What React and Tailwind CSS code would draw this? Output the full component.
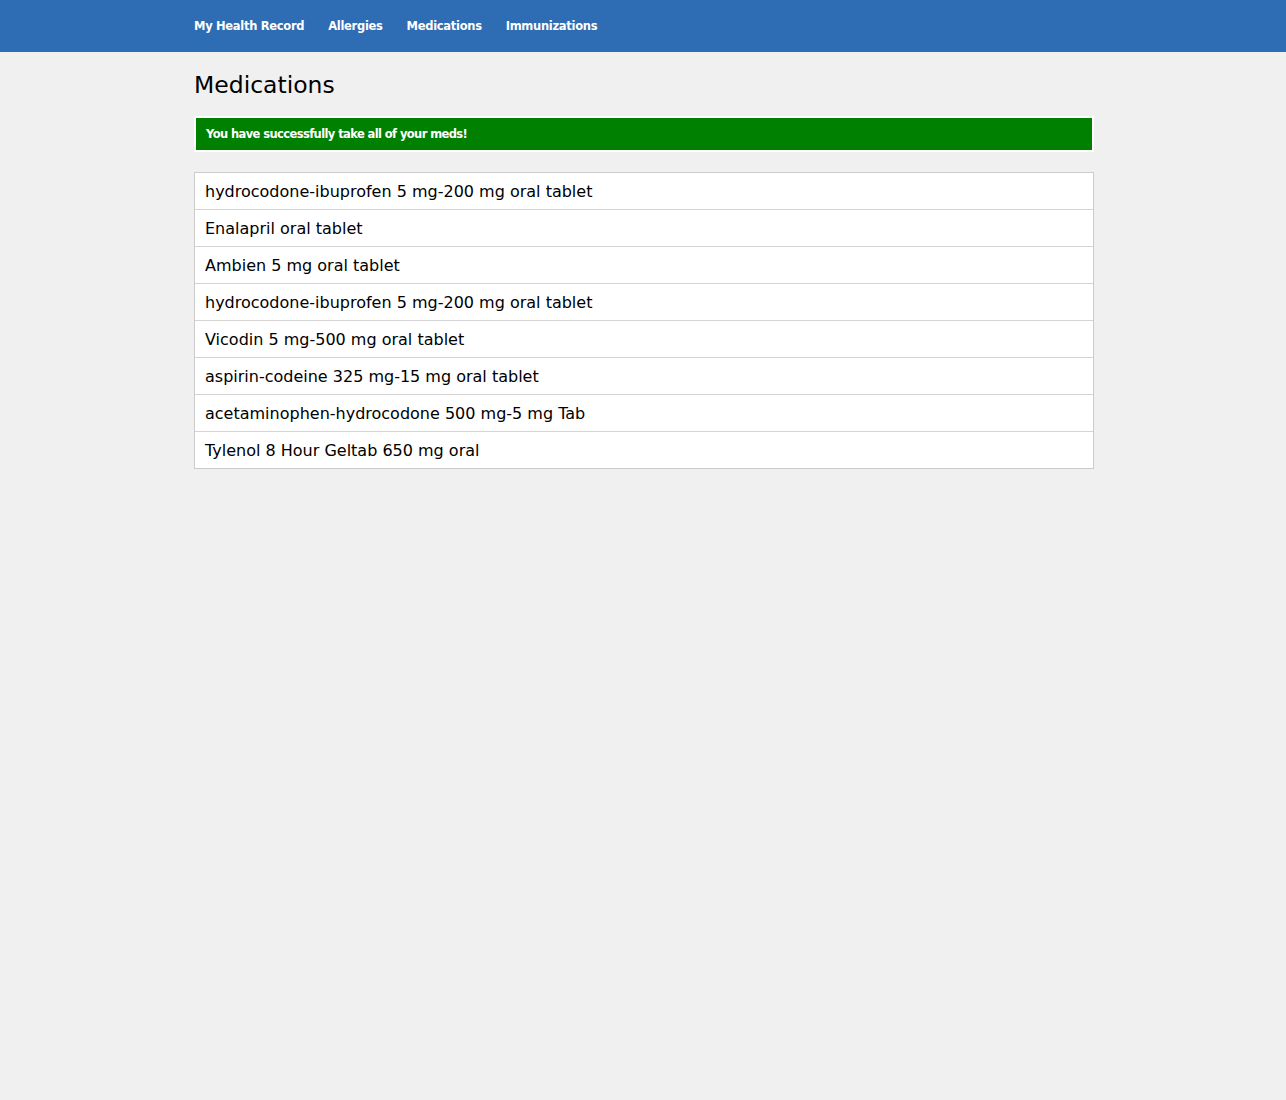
const NAV = ['My Health Record', 'Allergies', 'Medications', 'Immunizations'];

const MEDS = [
  'hydrocodone-ibuprofen 5 mg-200 mg oral tablet',
  'Enalapril oral tablet',
  'Ambien 5 mg oral tablet',
  'hydrocodone-ibuprofen 5 mg-200 mg oral tablet',
  'Vicodin 5 mg-500 mg oral tablet',
  'aspirin-codeine 325 mg-15 mg oral tablet',
  'acetaminophen-hydrocodone 500 mg-5 mg Tab',
  'Tylenol 8 Hour Geltab 650 mg oral',
];

export default function App() {
  return (
    <div className="min-h-[1100px] bg-[#f0f0f0] font-['DejaVu_Sans',sans-serif] text-black">
      {/* top nav */}
      <nav className="h-[52px] bg-[#2e6db3]">
        <div className="mx-auto flex h-full w-[902px] items-center gap-[24px] pl-[2px] pt-[2px]">
          {NAV.map((n) => (
            <a key={n} className="text-[11.5px] font-bold tracking-[-0.3px] text-white">{n}</a>
          ))}
        </div>
      </nav>

      <main className="mx-auto w-[902px] pl-[2px]">
        <h1 className="mt-[18px] text-[23.5px] leading-[30px]">Medications</h1>

        <div className="mt-[16px] border-2 border-white bg-[#008000] px-[10px] pb-[9px] pt-[9px] text-[11.5px] font-bold leading-[14px] tracking-[-0.6px] text-white">
          You have successfully take all of your meds!
        </div>

        <ul className="mt-[20px] border border-[#cccccc] bg-white">
          {MEDS.map((m, i) => (
            <li
              key={i}
              className={`px-[10px] text-[16px] leading-[38px] ${i < MEDS.length - 1 ? 'h-[37px] border-b border-[#d4d4d4]' : 'h-[36px]'}`}
            >
              {m}
            </li>
          ))}
        </ul>
      </main>
    </div>
  );
}
